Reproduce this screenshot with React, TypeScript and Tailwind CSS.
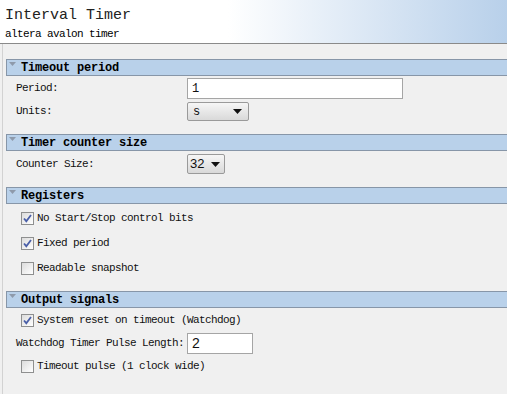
import React from "react";

const sans = { fontFamily: '"Liberation Sans", Arial, sans-serif' };

function SectionHeader({ title }: { title: string }) {
  return (
    <div className="flex h-[17px] items-center border-y border-l border-[#8796a8] bg-[#b9d1ea]">
      <svg width="7" height="5" viewBox="0 0 7 5" className="ml-[2px] -mt-[6px]">
        <polygon points="0,0 7,0 3.5,4" fill="#8e9aab" />
      </svg>
      <span className="ml-[5px] text-[12px] font-bold tracking-[-0.2px] text-black">{title}</span>
    </div>
  );
}

function Checkbox({ checked }: { checked: boolean }) {
  return (
    <div className="flex h-[13px] w-[13px] items-center justify-center border border-[#8e8f8f] bg-gradient-to-br from-[#dcdcdc] to-white">
      {checked && (
        <svg width="11" height="11" viewBox="0 0 11 11">
          <path d="M2 5.5 L4.3 8.2 L9 2" stroke="#4a5fa8" strokeWidth="1.8" fill="none" />
        </svg>
      )}
    </div>
  );
}

function CheckRow({ label, checked }: { label: string; checked: boolean }) {
  return (
    <div className="flex h-[25px] items-center pl-[15px]">
      <Checkbox checked={checked} />
      <span className="ml-[3px]">{label}</span>
    </div>
  );
}

function Arrow() {
  return (
    <svg width="9" height="5" viewBox="0 0 9 5">
      <polygon points="0,0 9,0 4.5,5" fill="#111" />
    </svg>
  );
}

export default function App() {
  return (
    <div className="h-[394px] w-[507px] overflow-hidden bg-[#f0f0f0] font-['Liberation_Mono','DejaVu_Sans_Mono',monospace] text-[11px] tracking-[-0.6px] text-[#111]">
      {/* Title banner */}
      <div className="h-[44px] border-b border-[#8a8a8a] bg-gradient-to-r from-white from-45% to-[#b8d0ea] pl-[5px] pt-[7px]">
        <div className="text-[15px] leading-[18px] tracking-normal text-[#222]">Interval Timer</div>
        <div className="mt-[3px] text-[11px] leading-[12px] text-black">altera avalon timer</div>
      </div>

      <div className="ml-[2px] h-full border-l border-[#d2d2d2] pl-[3px] pt-[15px]">
        {/* Timeout period */}
        <SectionHeader title="Timeout period" />
        <div className="pt-[2px] pb-[13px]">
          <div className="flex h-[21px] items-center">
            <span className="w-[181px] pl-[10px]">Period:</span>
            <div className="flex h-[21px] w-[216px] items-center border border-[#a5a5a5] bg-white pl-[4px] text-[12px]">1</div>
          </div>
          <div className="mt-[3px] flex h-[19px] items-center">
            <span className="w-[181px] pl-[10px]">Units:</span>
            <div className="flex h-[19px] w-[62px] items-center justify-between rounded-[2px] border border-[#9a9a9a] bg-gradient-to-b from-[#f6f6f6] to-[#d9d9d9] pl-[5px] pr-[6px]">
              <span className="text-[12px]">s</span>
              <Arrow />
            </div>
          </div>
        </div>

        {/* Timer counter size */}
        <SectionHeader title="Timer counter size" />
        <div className="pt-[3px] pb-[13px]">
          <div className="flex h-[20px] items-center">
            <span className="w-[181px] pl-[10px]">Counter Size:</span>
            <div className="flex h-[20px] w-[38px] items-center justify-between rounded-[2px] border border-[#9a9a9a] bg-gradient-to-b from-[#f6f6f6] to-[#d9d9d9] pl-[2px] pr-[4px]">
              <span className="text-[13px] tracking-normal" style={sans}>32</span>
              <Arrow />
            </div>
          </div>
        </div>

        {/* Registers */}
        <SectionHeader title="Registers" />
        <div className="pt-[2px] pb-[10px]">
          <CheckRow label="No Start/Stop control bits" checked />
          <CheckRow label="Fixed period" checked />
          <CheckRow label="Readable snapshot" checked={false} />
        </div>

        {/* Output signals */}
        <SectionHeader title="Output signals" />
        <div>
          <CheckRow label="System reset on timeout (Watchdog)" checked />
          <div className="flex h-[21px] items-center">
            <span className="w-[181px] pl-[10px]">Watchdog Timer Pulse Length:</span>
            <div className="flex h-[21px] w-[66px] items-center border border-[#a5a5a5] bg-white pl-[4px]">
              <span className="text-[14px] tracking-normal" style={sans}>2</span>
            </div>
          </div>
          <CheckRow label="Timeout pulse (1 clock wide)" checked={false} />
        </div>
      </div>
    </div>
  );
}
